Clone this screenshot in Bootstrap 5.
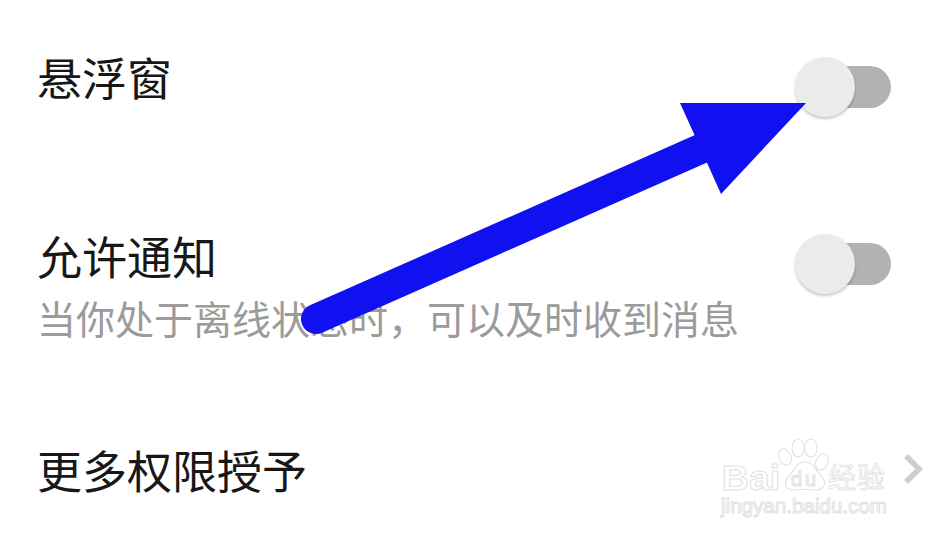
<!DOCTYPE html>
<html lang="zh">
<head>
<meta charset="utf-8">
<link href="https://cdn.jsdelivr.net/npm/bootstrap@5.3.0/dist/css/bootstrap.min.css" rel="stylesheet">
<style>
html,body{margin:0;background:#fff;}
.screen{width:940px;height:540px;position:relative;overflow:hidden;background:#fff;font-family:"Noto Sans CJK SC","Liberation Sans",sans-serif;}
.setting{padding-left:37px;padding-right:49px;}
.row-float{height:177px;padding-top:44px;}
.row-notify{height:173px;padding-top:46px;}
.row-more{height:190px;padding-top:87px;}
.ttl{font-size:45px;line-height:66px;color:#171717;}
.sub{font-size:39px;line-height:57px;color:#9b9b9b;}
.track{width:71px;height:42px;border-radius:21px;background:#b2b2b2;position:relative;}
.track-a{margin-top:22px;}
.track-b{margin-top:20px;}
.knob{width:60px;height:60px;border-radius:50%;background:#ebebeb;position:absolute;left:-25px;top:-9px;box-shadow:0 2px 3px rgba(0,0,0,.22);}
.chev{position:absolute;left:898px;top:451px;}
.overlay{position:absolute;left:0;top:0;}
.mark-wrap{position:absolute;left:715px;top:435px;}
.wm{font-family:"Liberation Sans",sans-serif;fill:#fff;stroke:#e2e2e2;stroke-width:1.1;}
.wm-cjk{font-family:"Noto Sans CJK SC",sans-serif;fill:#fff;stroke:#e0e0e0;stroke-width:.8;}
</style>
</head>
<body>
<div class="screen">
  <div class="setting row-float d-flex justify-content-between align-items-start">
    <div class="ttl">悬浮窗</div>
    <div class="track track-a"><div class="knob"></div></div>
  </div>
  <div class="setting row-notify d-flex justify-content-between align-items-start">
    <div>
      <div class="ttl">允许通知</div>
      <div class="sub">当你处于离线状态时，可以及时收到消息</div>
    </div>
    <div class="track track-b"><div class="knob"></div></div>
  </div>
  <div class="setting row-more d-flex align-items-start">
    <div class="ttl">更多权限授予</div>
  </div>
  <svg class="mark-wrap" width="180" height="90" viewBox="0 0 180 90">
    <text class="wm" x="7" y="55" font-size="35" font-weight="700" textLength="58" lengthAdjust="spacingAndGlyphs">Bai</text>
    <g fill="#fff" stroke="#e2e2e2" stroke-width="1.1">
      <ellipse cx="70" cy="22" rx="6" ry="8.5" transform="rotate(-25 70 22)"/>
      <ellipse cx="83" cy="13" rx="6" ry="9"/>
      <ellipse cx="96" cy="13" rx="6" ry="9"/>
      <ellipse cx="107" cy="27" rx="6" ry="8.5" transform="rotate(25 107 27)"/>
      <path d="M90 27 C99 27 100 35 106 41 C113 48 109 56 99 55 C93 54 87 54 81 55 C71 56 67 48 74 41 C80 35 81 27 90 27Z"/>
    </g>
    <text class="wm" x="76" y="51" font-size="20" font-weight="400" stroke-width="0.6" textLength="25">du</text>
    <text class="wm-cjk" x="113" y="53" font-size="28" textLength="57">经验</text>
    <text class="wm" x="6" y="78" font-size="21" font-weight="400" stroke-width="0.6" textLength="166" lengthAdjust="spacingAndGlyphs">jingyan.baidu.com</text>
  </svg>
  <svg class="chev" width="28" height="36" viewBox="0 0 28 36"><path d="M8 5 L21 18 L8 31" fill="none" stroke="#cdcdcd" stroke-width="5.5"/></svg>
  <svg class="overlay" width="940" height="540" viewBox="0 0 940 540">
    <line x1="316" y1="319" x2="705" y2="147" stroke="#1010f0" stroke-width="30" stroke-linecap="round"/>
    <polygon points="680,103 806,103 721,194 695,136" fill="#1010f0"/>
  </svg>
</div>
<script src="https://cdn.jsdelivr.net/npm/bootstrap@5.3.0/dist/js/bootstrap.bundle.min.js"></script>
</body>
</html>
